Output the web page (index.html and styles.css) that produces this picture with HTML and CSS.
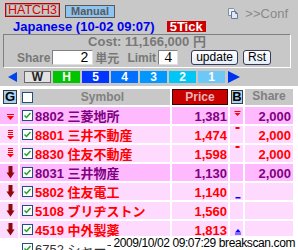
FILE: index.html
```html
<!DOCTYPE html>
<html>
<head>
<meta charset="utf-8">
<link rel="stylesheet" href="styles.css">
</head>
<body>
<div class="app">
  <div class="bar">
    <span class="hatch">HATCH3</span>
    <span class="manual">Manual</span>
    <span class="conf">
      <svg class="conf-ico" width="10" height="11" viewBox="0 0 10 11">
        <path d="M0.5 0.5 H5.5 L6.5 1.5 V7.5 H0.5 Z" fill="#eef2f8" stroke="#8090a8"/>
        <path d="M3.5 3.5 H7.5 L9.5 5.5 V10.5 H3.5 Z" fill="#dfe8f6" stroke="#6a7a94"/>
        <path d="M7.5 3.5 V5.5 H9.5" fill="none" stroke="#6a7a94"/>
      </svg>
      <span>&gt;&gt;Conf</span>
    </span>
  </div>
  <div class="title">
    <span class="market">Japanese (10-02 09:07)</span>
    <span class="tick">5Tick</span>
  </div>
  <div class="panel">
    <div class="cost">Cost: 11,166,000 円</div>
    <div class="order">
      <span class="lbl">Share</span>
      <span class="field share-in">2</span>
      <span class="lbl unit">単元</span>
      <span class="lbl limit">Limit</span>
      <span class="field limit-in">4</span>
      <span class="btn upd">update</span>
      <span class="btn rst">Rst</span>
    </div>
  </div>
  <div class="tabs">
    <span class="tri-l"></span>
    <span class="tab tw">W</span>
    <span class="tab th">H</span>
    <span class="tab t5">5</span>
    <span class="tab t4">4</span>
    <span class="tab t3">3</span>
    <span class="tab t2">2</span>
    <span class="tab t1">1</span>
    <span class="tri-r"></span>
  </div>
  <div class="grid">
    <div class="row head">
      <div class="c g"><span class="gbox">G</span></div>
      <div class="c sym"><svg class="cb" width="11" height="11" viewBox="0 0 11 11"><rect x="0.5" y="0.5" width="10" height="10" fill="#fff" stroke="#1c5180"/></svg><span class="hsym">Symbol</span></div>
      <div class="c price"><span class="pbox">Price</span></div>
      <div class="c b"><span class="bbox">B</span></div>
      <div class="c share">Share</div>
    </div>

    <div class="row p">
      <div class="c g"><svg width="18" height="17" viewBox="0 0 18 17"><rect x="7" y="7" width="7" height="1" fill="#f00"/><polygon points="7,9 14,9 10.5,13" fill="#f00"/></svg></div>
      <div class="c sym"><svg class="cb" width="11" height="11" viewBox="0 0 11 11"><rect x="0.5" y="0.5" width="10" height="10" fill="#fff" stroke="#1c5180"/><path d="M2.5 5.5 L4.5 7.5 L8.5 3" fill="none" stroke="#1fa51f" stroke-width="1.5"/></svg><span>8802 三菱地所</span></div>
      <div class="c num">1,381</div>
      <div class="c b"><svg width="13" height="17" viewBox="0 0 13 17"><rect x="4.5" y="4" width="6" height="1" fill="#f00"/><polygon points="4.5,6 10.5,6 7.5,9" fill="#f00"/></svg></div>
      <div class="c num sh">2,000</div>
    </div>

    <div class="row r">
      <div class="c g"><svg width="18" height="17" viewBox="0 0 18 17"><rect x="8" y="4" width="5" height="1" fill="#f00"/><rect x="8" y="6" width="5" height="1" fill="#f00"/><rect x="8" y="8" width="5" height="1" fill="#f00"/><polygon points="7,10 14,10 10.5,13.5" fill="#f00"/></svg></div>
      <div class="c sym"><svg class="cb" width="11" height="11" viewBox="0 0 11 11"><rect x="0.5" y="0.5" width="10" height="10" fill="#fff" stroke="#1c5180"/><path d="M2.5 5.5 L4.5 7.5 L8.5 3" fill="none" stroke="#1fa51f" stroke-width="1.5"/></svg><span>8801 三井不動産</span></div>
      <div class="c num">1,474</div>
      <div class="c b"><svg width="13" height="17" viewBox="0 0 13 17"><rect x="5.5" y="1" width="4" height="2" fill="#f00"/></svg></div>
      <div class="c num sh">2,000</div>
    </div>

    <div class="row r">
      <div class="c g"><svg width="18" height="17" viewBox="0 0 18 17"><rect x="8" y="3" width="5" height="1" fill="#f00"/><rect x="8" y="5" width="5" height="1" fill="#f00"/><rect x="8" y="7" width="5" height="1" fill="#f00"/><polygon points="7,9 14,9 10.5,12.5" fill="#f00"/></svg></div>
      <div class="c sym"><svg class="cb" width="11" height="11" viewBox="0 0 11 11"><rect x="0.5" y="0.5" width="10" height="10" fill="#fff" stroke="#1c5180"/><path d="M2.5 5.5 L4.5 7.5 L8.5 3" fill="none" stroke="#1fa51f" stroke-width="1.5"/></svg><span>8830 住友不動産</span></div>
      <div class="c num">1,598</div>
      <div class="c b"><svg width="13" height="17" viewBox="0 0 13 17"><rect x="5.5" y="1" width="4" height="2" fill="#f00"/></svg></div>
      <div class="c num sh">2,000</div>
    </div>

    <div class="row p">
      <div class="c g"><svg width="18" height="17" viewBox="0 0 18 17"><rect x="8.5" y="2" width="4" height="7" fill="#8e0a0a"/><polygon points="6.5,8.5 14.5,8.5 10.5,14.5" fill="#8e0a0a"/></svg></div>
      <div class="c sym"><svg class="cb" width="11" height="11" viewBox="0 0 11 11"><rect x="0.5" y="0.5" width="10" height="10" fill="#fff" stroke="#1c5180"/><path d="M2.5 5.5 L4.5 7.5 L8.5 3" fill="none" stroke="#1fa51f" stroke-width="1.5"/></svg><span>8031 三井物産</span></div>
      <div class="c num">1,130</div>
      <div class="c b"></div>
      <div class="c num sh">2,000</div>
    </div>

    <div class="row r">
      <div class="c g"><svg width="18" height="17" viewBox="0 0 18 17"><rect x="8.5" y="2" width="4" height="7" fill="#8e0a0a"/><polygon points="6.5,8.5 14.5,8.5 10.5,14.5" fill="#8e0a0a"/></svg></div>
      <div class="c sym"><svg class="cb" width="11" height="11" viewBox="0 0 11 11"><rect x="0.5" y="0.5" width="10" height="10" fill="#fff" stroke="#1c5180"/><path d="M2.5 5.5 L4.5 7.5 L8.5 3" fill="none" stroke="#1fa51f" stroke-width="1.5"/></svg><span>5802 住友電工</span></div>
      <div class="c num">1,140</div>
      <div class="c b"><svg width="13" height="17" viewBox="0 0 13 17"><rect x="5.5" y="14" width="5" height="1.5" fill="#00f"/></svg></div>
      <div class="c num sh"></div>
    </div>

    <div class="row r">
      <div class="c g"><svg width="18" height="17" viewBox="0 0 18 17"><rect x="8.5" y="2" width="4" height="7" fill="#8e0a0a"/><polygon points="6.5,8.5 14.5,8.5 10.5,14.5" fill="#8e0a0a"/></svg></div>
      <div class="c sym"><svg class="cb" width="11" height="11" viewBox="0 0 11 11"><rect x="0.5" y="0.5" width="10" height="10" fill="#fff" stroke="#1c5180"/><path d="M2.5 5.5 L4.5 7.5 L8.5 3" fill="none" stroke="#1fa51f" stroke-width="1.5"/></svg><span>5108 ブリヂストン</span></div>
      <div class="c num">1,560</div>
      <div class="c b"></div>
      <div class="c num sh"></div>
    </div>

    <div class="row r">
      <div class="c g"><svg width="18" height="17" viewBox="0 0 18 17"><rect x="8.5" y="2" width="4" height="7" fill="#8e0a0a"/><polygon points="6.5,8.5 14.5,8.5 10.5,14.5" fill="#8e0a0a"/></svg></div>
      <div class="c sym"><svg class="cb" width="11" height="11" viewBox="0 0 11 11"><rect x="0.5" y="0.5" width="10" height="10" fill="#fff" stroke="#1c5180"/><path d="M2.5 5.5 L4.5 7.5 L8.5 3" fill="none" stroke="#1fa51f" stroke-width="1.5"/></svg><span>4519 中外製薬</span></div>
      <div class="c num">1,813</div>
      <div class="c b"><svg width="13" height="17" viewBox="0 0 13 17"><polygon points="5,11.5 11,11.5 8,8" fill="#00f"/><rect x="5" y="12.5" width="6" height="1" fill="#00f"/></svg></div>
      <div class="c num sh"></div>
    </div>

    <div class="row n">
      <div class="c g"></div>
      <div class="c sym"><svg class="cb" width="11" height="11" viewBox="0 0 11 11"><rect x="0.5" y="0.5" width="10" height="10" fill="#fff" stroke="#1c5180"/><path d="M2.5 5.5 L4.5 7.5 L8.5 3" fill="none" stroke="#1fa51f" stroke-width="1.5"/></svg><span>6752 シャープ</span></div>
      <div class="c num"></div>
      <div class="c b"></div>
      <div class="c num sh"></div>
    </div>
  </div>
  <div class="stamp">2009/10/02 09:07:29 breakscan.com</div>
</div>
</body>
</html>
```

FILE: styles.css
```css
* { box-sizing: border-box; }
html, body { margin: 0; padding: 0; }
body {
  width: 298px;
  height: 250px;
  overflow: hidden;
  background: #c8c8c8;
  font-family: "Liberation Sans", "Noto Sans CJK JP", sans-serif;
}
.app { position: relative; width: 298px; height: 250px; overflow: hidden; }

/* top bar */
.bar { display: flex; align-items: flex-start; height: 18px; padding: 3px 0 0 5px; }
.hatch {
  width: 55px; height: 14px;
  border: 1px solid #c00000;
  box-shadow: inset 0 0 0 1px #9a9a9a;
  color: #e00000; font-size: 12.5px; line-height: 12px;
  text-align: center;
}
.manual {
  margin: 2px 0 0 5px; width: 50px; height: 13px;
  background: #8ec4f2; border: 1px solid #5a5a5a;
  color: #5a5a5a; font-weight: bold; font-size: 11px; line-height: 11px;
  text-align: center;
}
.conf {
  margin: 5px 10px 0 auto;
  display: flex; align-items: center; gap: 7px;
  color: #888; font-size: 13px; line-height: 11px;
}
.conf-ico { display: block; }

/* title */
.title { display: flex; align-items: center; height: 15px; padding-left: 13px; margin-top: 1px; }
.market { color: #0000f0; font-weight: bold; font-size: 13px; line-height: 13px; }
.tick {
  margin-left: 12px; height: 11px; padding: 0 3px;
  background: #cc0000; color: #fff; font-weight: bold; font-size: 13px; line-height: 11px;
}

/* panel */
.panel {
  margin: 0 7px 0 3px; height: 34px;
  border: 1px solid; border-color: #808080 #fff #fff #808080;
}
.cost { text-align: center; color: #787878; font-weight: bold; font-size: 13px; line-height: 12px; padding-top: 1px; }
.order { display: flex; align-items: center; height: 17px; margin-top: 1px; padding-left: 13px; }
.lbl { color: #787878; font-weight: bold; font-size: 12px; }
.field {
  height: 15px; background: #fff;
  border: 1px solid; border-color: #808080 #e0e0e0 #e0e0e0 #808080;
  color: #000; text-align: right; line-height: 13px;
}
.share-in { width: 41px; margin-left: 2px; padding-right: 4px; font-size: 14px; }
.unit { margin-left: 2px; }
.limit { margin-left: 8px; }
.limit-in { width: 20px; margin-left: 2px; padding-right: 5px; font-family: "Liberation Serif", serif; font-size: 15px; }
.btn {
  height: 15px; line-height: 13px; font-size: 12px; color: #000;
  border: 1px solid #3a3a58; border-radius: 3px;
  background: linear-gradient(#ffffff, #e4ecf6);
  text-align: center;
}
.upd { width: 47px; margin-left: 13px; }
.rst { width: 28px; margin-left: 5px; }

/* tabs */
.tabs { display: flex; align-items: center; height: 12px; margin-top: 3px; padding-left: 8px; gap: 2px; }
.tri-l { width: 0; height: 0; border-right: 9px solid #0044f0; border-top: 5px solid transparent; border-bottom: 5px solid transparent; margin-right: 5px; }
.tri-r { width: 0; height: 0; border-left: 12px solid #0030f0; border-top: 6px solid transparent; border-bottom: 6px solid transparent; margin-left: 1px; }
.tab { width: 27px; height: 12px; color: #fff; font-weight: bold; font-size: 12px; line-height: 12px; text-align: center; }
.tw { background: #e2e2e2; border: 1px solid #6a6a6a; color: #222; line-height: 10px; }
.th { background: #00c400; }
.t5 { background: #0036ff; }
.t4 { background: #0070ff; }
.t3 { background: #0098ff; }
.t2 { background: #00c6f6; }
.t1 { background: #6ec8f6; }

/* grid */
.grid { margin-top: 3px; background: #fff; padding-top: 3px; display: flex; flex-direction: column; gap: 2px; height: 170px; }
.row { display: grid; grid-template-columns: 18px 150px 56px 13px 48px; column-gap: 2px; height: 17px; }
.row.head { height: 16px; }
.c { font-weight: bold; font-size: 13px; line-height: 19px; white-space: nowrap; overflow: hidden; }
.c svg { display: block; }
.sym { display: flex; align-items: flex-start; padding-left: 2px; }
.cb { margin: 3px 2px 0 0; flex: none; }
.num { text-align: right; padding-right: 1px; }
.sh { padding-right: 2px; }

.head .c { line-height: 14px; font-size: 12px; }
.head .g { background: #fff; padding: 1px 1px 1px 3px; }
.gbox { display: block; height: 14px; background: #a6d2f4; border: 1px solid #3c3c3c; color: #000; text-align: center; font-size: 13px; line-height: 12px; }
.head .sym { background: #c8c8c8; align-items: center; }
.head .cb { margin-top: 0; }
.hsym { flex: 1; text-align: center; color: #808080; }
.head .price { background: #fff; }
.pbox { display: block; height: 16px; background: #c80000; border: 1px solid #3a0000; color: #e6b8b8; text-align: center; line-height: 14px; }
.head .b { background: #fff; padding: 1px 0 1px 1px; }
.bbox { display: block; height: 14px; background: #a6d2f4; border: 1px solid #3c3c3c; color: #000; text-align: center; font-size: 13px; line-height: 12px; }
.head .share { background: #c8c8c8; color: #808080; text-align: center; }

.row.p .c { background: #ffb9ff; color: #800080; }
.row.r .c { background: #ffdaff; color: #ff0000; }
.row.n .c { background: #fff; color: #333; font-weight: normal; }

.stamp {
  position: absolute; right: 0; bottom: 0;
  background: #fff; color: #000;
  padding: 1px 3px 0 2px;
  font-size: 12px; line-height: 13px; letter-spacing: -0.4px;
}
```
